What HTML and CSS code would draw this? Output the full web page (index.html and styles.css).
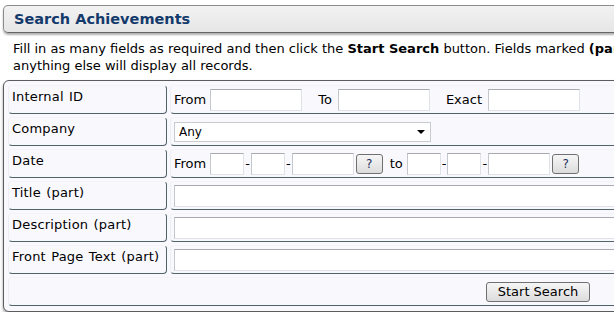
FILE: index.html
```html
<!DOCTYPE html>
<html lang="en">
<head>
    <meta charset="UTF-8">
    <title>Search Achievements</title>
    <link rel="stylesheet" href="styles.css">
</head>
<body>
    <div class="page">
        <h2 class="heading">Search Achievements</h2>
        <p class="intro">Fill in as many fields as required and then click the <b>Start Search</b> button. Fields marked <b>(part)</b> will match any part of the text,<br>anything else will display all records.</p>
        <form class="search-box" onsubmit="return false">
            <div class="label">Internal ID</div>
            <div class="field">
                <span class="word">From</span><input type="text" class="num">
                <span class="word gap">To</span><input type="text" class="num">
                <span class="word gap">Exact</span><input type="text" class="num">
            </div>

            <div class="label">Company</div>
            <div class="field">
                <span class="select-wrap">
                    <select class="company">
                        <option>Any</option>
                    </select>
                </span>
            </div>

            <div class="label">Date</div>
            <div class="field">
                <span class="word">From</span><input type="text" class="day"><span class="dash">-</span><input type="text" class="day"><span class="dash">-</span><input type="text" class="year"><button type="button" class="pick">?</button>
                <span class="word gap-sm">to</span><input type="text" class="day"><span class="dash">-</span><input type="text" class="day"><span class="dash">-</span><input type="text" class="year"><button type="button" class="pick">?</button>
            </div>

            <div class="label">Title (part)</div>
            <div class="field"><input type="text" class="wide"></div>

            <div class="label">Description (part)</div>
            <div class="field"><input type="text" class="wide"></div>

            <div class="label">Front Page Text (part)</div>
            <div class="field"><input type="text" class="wide"></div>

            <div class="actions">
                <button type="submit" class="start">Start Search</button>
            </div>
        </form>
    </div>
</body>
</html>
```

FILE: styles.css
```css
body {
    font-family: "DejaVu Sans", Verdana, sans-serif;
    font-size: 13px;
    color: #000;
    background: #fff;
    margin: 0;
    padding: 5px 0 0 3px;
    overflow: hidden;
}
.page {
    width: 1070px;
}
.heading {
    margin: 0;
    height: 26px;
    line-height: 26px;
    padding-left: 10px;
    font-size: 14.5px;
    font-weight: bold;
    color: #143a6c;
    background: linear-gradient(#f2f2f2, #e6e6e6);
    border: 1px solid #8c8c8c;
    border-bottom-color: #666;
    border-radius: 5px;
    box-shadow: 0 2px 2px rgba(0, 0, 0, 0.3);
}
.intro {
    margin: 7px 0 6px 10px;
    line-height: 17px;
}
.search-box {
    display: grid;
    grid-template-columns: 159px 1fr;
    grid-auto-rows: 29px;
    gap: 3px;
    padding: 4px 4px 5px;
    background: #f9f9fd;
    border: 1px solid #5c5c5c;
    border-radius: 6px;
    box-shadow: 0 2px 3px rgba(0, 0, 0, 0.4);
}
.label, .field, .actions {
    border: 1px solid #50626b;
    border-top-color: #f3f3f8;
    border-left-color: #eceef2;
    border-radius: 4px;
}
.label {
    padding: 3px 3px 0;
    line-height: 16px;
    letter-spacing: 0.2px;
    word-spacing: 1px;
    white-space: nowrap;
}
.field {
    display: flex;
    align-items: center;
    padding: 0 3px;
    white-space: nowrap;
}
.word {
    margin-right: 4px;
}
.gap {
    margin-left: 16px;
    margin-right: 6px;
}
.gap-sm {
    margin-left: 7px;
}
.dash {
    margin: 0 1px;
}
input[type="text"] {
    box-sizing: border-box;
    height: 22px;
    margin: 0;
    padding: 1px 3px;
    font: inherit;
    background: #fff;
    border: 1px solid #dfe3e8;
    border-top-color: #a8acb0;
    border-left-color: #c4c8cc;
}
.num {
    width: 92px;
}
.day {
    width: 34px;
}
.year {
    width: 62px;
}
.wide {
    flex: 1;
}
.select-wrap {
    position: relative;
    display: inline-block;
}
.select-wrap::after {
    content: "";
    position: absolute;
    right: 6px;
    top: 8px;
    border-left: 4px solid transparent;
    border-right: 4px solid transparent;
    border-top: 4px solid #000;
    pointer-events: none;
}
.company {
    appearance: none;
    width: 257px;
    height: 20px;
    padding: 0 4px;
    font: inherit;
    font-size: 12px;
    background: #fff;
    border: 1px solid #c8ccd0;
    border-radius: 0;
}
.pick, .start {
    font-family: inherit;
    color: #000;
    background: linear-gradient(#f6f6f6, #dcdcdc);
    border: 1px solid #707070;
    border-radius: 3px;
    cursor: pointer;
}
.pick {
    width: 27px;
    height: 20px;
    margin-left: 2px;
    padding: 0;
    font-size: 12px;
    color: #1c2f5a;
}
.actions {
    grid-column: 1 / -1;
    display: flex;
    align-items: center;
    justify-content: center;
}
.start {
    width: 104px;
    height: 20px;
    padding: 0;
    font-size: 13px;
}
```
